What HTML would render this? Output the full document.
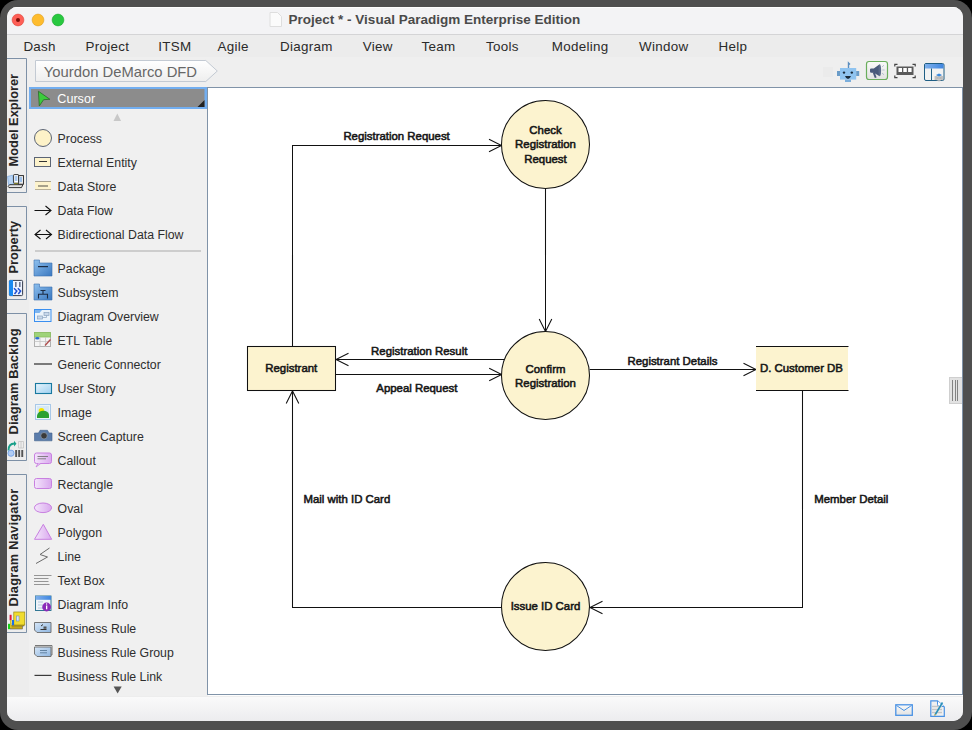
<!DOCTYPE html>
<html><head><meta charset="utf-8">
<style>
*{box-sizing:border-box;margin:0;padding:0}
html,body{width:972px;height:730px;overflow:hidden;background:#000}
body{position:relative;font-family:"Liberation Sans",sans-serif}
svg{position:absolute;left:0;top:0}
svg text{font-family:"Liberation Sans",sans-serif}
</style></head>
<body>
<svg width="972" height="730" viewBox="0 0 972 730">
<defs><clipPath id="wclip"><rect x="7" y="7" width="956" height="714" rx="10"/></clipPath></defs>
<rect x="0" y="0" width="972" height="730" rx="18" fill="#4f4f4f"/>
<g clip-path="url(#wclip)">
<rect x="7" y="7" width="956" height="714" fill="#f0f0f0"/>
<!-- title bar -->
<rect x="7" y="7" width="956" height="27" fill="#f3f3f5"/>
<rect x="7" y="7" width="956" height="1" fill="#fdfdfd"/>
<rect x="7" y="34" width="956" height="1" fill="#d4d4d6"/>
<circle cx="18" cy="20" r="5.9" fill="#fe5f57" stroke="#e0443a" stroke-width="0.6"/>
<circle cx="18" cy="20" r="2" fill="#7e0d07"/>
<circle cx="38" cy="20" r="5.9" fill="#febc2e" stroke="#e0a020" stroke-width="0.6"/>
<circle cx="58" cy="20" r="5.9" fill="#28c840" stroke="#1aa82e" stroke-width="0.6"/>
<path d="M270 12.5 H277.5 L281.5 16.5 V26.5 H270 Z" fill="#fbfbfb" stroke="#dedede" stroke-width="1"/>
<text x="288.6" y="24.3" font-size="13.5" font-weight="bold" fill="#4a4a4a">Project * - Visual Paradigm Enterprise Edition</text>
<!-- menu bar -->
<rect x="7" y="35" width="956" height="22" fill="#ececec"/>
<g font-size="13.4" fill="#2a2a2a" letter-spacing="0.3">
<text x="23.4" y="51">Dash</text>
<text x="85.6" y="51">Project</text>
<text x="158.2" y="51">ITSM</text>
<text x="217.6" y="51">Agile</text>
<text x="280" y="51">Diagram</text>
<text x="362.8" y="51">View</text>
<text x="421.6" y="51">Team</text>
<text x="486" y="51">Tools</text>
<text x="551.8" y="51">Modeling</text>
<text x="639.1" y="51">Window</text>
<text x="718.5" y="51">Help</text>
</g>
<!-- crumb row -->
<rect x="7" y="57" width="956" height="30" fill="#efefef"/>
<path d="M35.5 60.5 H205.8 L217.3 71 L205.8 81.5 H35.5 Z" fill="url(#gcrumb)" stroke="#c3cad3" stroke-width="1"/>
<text x="43.8" y="76.9" font-size="14.8" fill="#676767">Yourdon DeMarco DFD</text>
<!-- toolbar icons -->
<rect x="823" y="67" width="10" height="10" fill="#ebebeb"/>
<g>
<rect x="840" y="68" width="16.2" height="11.6" fill="#90c4f0"/>
<rect x="837" y="71" width="3" height="5" fill="#6a9cc8"/>
<rect x="856.2" y="71" width="3" height="5" fill="#6a9cc8"/>
<rect x="845" y="79.6" width="6" height="2.4" fill="#7aaedc"/>
<path d="M848.5 68 V63 L850 64.5" stroke="#5a8ec0" stroke-width="1.4" fill="none"/>
<circle cx="844" cy="72.6" r="1.2" fill="#1a2a3a"/><circle cx="851.8" cy="72.6" r="1.2" fill="#1a2a3a"/>
<path d="M845 76 H851 Q850 79 848 79 Q846 79 845 76 Z" fill="#1a2a3a"/>
</g>
<rect x="866.5" y="61.5" width="21" height="18" rx="2.5" fill="url(#gbtn)" stroke="#6aae5c" stroke-width="1.2"/>
<path d="M870 69.6 Q870 68.4 871.2 68.4 H873.8 L879.6 64.2 V76.2 L873.8 72.8 H871.2 Q870 72.8 870 71.6 Z" fill="#4a5a7c"/><path d="M872.6 72.3 L874.8 77.9 L876.6 77.5 L874.8 72.6 Z" fill="#4a5a7c"/><ellipse cx="879.8" cy="70.2" rx="1.3" ry="6" fill="#5a6a8a"/>
<path d="M882 67 L884 65.2 M882.3 70 H884.6 M882 73 L884 74.8" stroke="#a8b6c8" stroke-width="0.8"/>
<g>
<path d="M894.8 66.5 V64.3 H897.5 M912.5 64.3 H915.2 V66.5 M894.8 75.5 V77.7 H897.5 M912.5 77.7 H915.2 V75.5" fill="none" stroke="#444" stroke-width="1.2"/>
<rect x="896.5" y="66.5" width="17" height="8.5" fill="#5a5a5a"/>
<rect x="898.5" y="68" width="3.5" height="4" fill="#fff"/><rect x="903.3" y="68" width="3.5" height="4" fill="#fff"/><rect x="908.1" y="68" width="3.5" height="4" fill="#fff"/>
</g>
<g>
<rect x="924.5" y="63.5" width="19.5" height="17" rx="1.5" fill="#f2f2f2" stroke="#1f5e84" stroke-width="1"/>
<rect x="925" y="64" width="18.5" height="4.5" fill="url(#gbar)"/>
<path d="M931.5 68.5 V80.5" stroke="#1f5e84" stroke-width="1"/>
<path d="M934.5 77 L939 75 L943.5 77 L939 79 Z M934.5 79 L939 77 L943.5 79 L939 81 Z" fill="#cfcfcf" stroke="#9a9a9a" stroke-width="0.5"/>
<path d="M936 75 L939 73.5 L942 75 L939 76.5 Z" fill="#3a8ae0"/>
</g>
<!-- tabs column -->
<rect x="7" y="87" width="22" height="610" fill="#ededed"/>

<g fill="#ededed" stroke="#7d90a6" stroke-width="1">
<path d="M7 58.5 H26.5 V192.5 H7"/>
<path d="M7 206.5 H26.5 V299.5 H7"/>
<path d="M7 313.5 H26.5 V460.5 H7"/>
<path d="M7 474.5 H26.5 V632.5 H7"/>
</g>
<g font-size="12.8" font-weight="bold" fill="#262626">
<text transform="translate(17.9 166.4) rotate(-90)">Model Explorer</text>
<text transform="translate(17.9 273.6) rotate(-90)">Property</text>
<text transform="translate(17.9 434.4) rotate(-90)" letter-spacing="0.1">Diagram Backlog</text>
<text transform="translate(17.9 606.5) rotate(-90)" letter-spacing="0.25">Diagram Navigator</text>
</g>
<!-- tab icons -->
<g>
<path d="M7.5 176.5 L12.5 175.2 L13.8 184 L8.6 184.8 Z" fill="#b9d5f5" stroke="#7aa6dc" stroke-width="0.7"/>
<rect x="18.3" y="175.6" width="5.2" height="8.6" fill="#e8e8e8" stroke="#222" stroke-width="0.9"/>
<rect x="19.5" y="177" width="2.5" height="5" fill="#9cc0ea"/>
<rect x="13.6" y="174.6" width="5" height="8.6" rx="0.6" fill="#fff" stroke="#222" stroke-width="0.9"/>
<rect x="14.8" y="176" width="2.6" height="5" fill="#a8c8f0"/>
<rect x="14" y="183.3" width="4" height="1" fill="#8a8a10"/>
<path d="M8.2 186.4 L9.6 184.7 H22.9 L21.5 187.6 H9 Z" fill="#e6e6e6" stroke="#222" stroke-width="0.9"/>
<rect x="9.4" y="280.4" width="13.2" height="15.2" rx="1" fill="#eef4ff" stroke="#343c4c" stroke-width="1"/>
<path d="M13 280 H11 Q9 280 9 282 V294 Q9 296 11 296 H13 Z" fill="#1a8af0"/>
<rect x="15" y="282" width="1.6" height="5" fill="#6a7590"/><rect x="19" y="282" width="1.6" height="5" fill="#6a7590"/>
<path d="M14 288.3 L16.8 291 L14.5 294 M17.8 288.3 L20.6 291 L18.3 294" fill="none" stroke="#1f4fd0" stroke-width="1.5"/>
<path d="M8.5 450.5 Q8.5 443.5 14.5 443.5" fill="none" stroke="#1aa08a" stroke-width="1.9"/>
<path d="M14 440.8 L16.5 443.8 L14 446.6 Z" fill="#1aa08a"/>
<circle cx="11" cy="453.2" r="3.1" fill="#b2cdf4" stroke="#6a9ae4" stroke-width="0.8"/>
<rect x="15.2" y="450" width="1.9" height="7" fill="#555"/><rect x="18.2" y="450" width="1.9" height="7" fill="#555"/><rect x="21.3" y="450" width="1.9" height="7" fill="#555"/>
<path d="M18.5 441.5 H23.5 V448 H18.5 Z M21 441.5 V448" fill="none" stroke="#c4c4c4" stroke-width="0.8"/>
<rect x="10.5" y="625.5" width="12" height="3.5" fill="#c8a818" stroke="#555" stroke-width="0.5"/>
<rect x="12" y="623.5" width="12" height="2.5" fill="#c8a818" stroke="#555" stroke-width="0.5"/>
<rect x="13.8" y="612" width="11" height="13" fill="#f0dc30" stroke="#9a8a10" stroke-width="0.7"/>
<rect x="16.4" y="616" width="2.6" height="5" fill="#dde8f8" stroke="#6a8ad0" stroke-width="0.6"/>
<rect x="9.6" y="614.8" width="2" height="5.5" fill="#e0183a"/>
<rect x="12" y="620" width="2" height="5.2" fill="#1a70e8"/>
<rect x="8" y="623.8" width="2" height="5.4" fill="#18d018"/>
<rect x="10" y="620" width="1.5" height="8" fill="#d8c020"/>
</g>

<!-- palette -->
<rect x="29" y="87" width="178" height="22" fill="#72aef0"/>
<rect x="31" y="89" width="173.5" height="18" fill="#8c8c8c"/>
<path d="M197.5 107 L204.5 100 V107 Z" fill="#222"/>
<path d="M38.4 91.2 L49.9 99.3 L43.6 99.7 L39.3 106 Z" fill="#3ccc3c" stroke="#2a6a2a" stroke-width="0.8" stroke-linejoin="round"/>
<text x="57.3" y="103" font-size="12.6" fill="#ffffff">Cursor</text>
<path d="M113.5 121 L117.3 113.5 L121.1 121 Z" fill="#c8c8c8"/>
<path d="M113.6 686.6 H121.7 L117.65 693.6 Z" fill="#555"/>
<g font-size="12.3" fill="#2e2e2e"><text x="57.6" y="143">Process</text><text x="57.6" y="167">External Entity</text><text x="57.6" y="191">Data Store</text><text x="57.6" y="215">Data Flow</text><text x="57.6" y="239">Bidirectional Data Flow</text><text x="57.6" y="273">Package</text><text x="57.6" y="297">Subsystem</text><text x="57.6" y="321">Diagram Overview</text><text x="57.6" y="345">ETL Table</text><text x="57.6" y="369">Generic Connector</text><text x="57.6" y="393">User Story</text><text x="57.6" y="417">Image</text><text x="57.6" y="441">Screen Capture</text><text x="57.6" y="465">Callout</text><text x="57.6" y="489">Rectangle</text><text x="57.6" y="513">Oval</text><text x="57.6" y="537">Polygon</text><text x="57.6" y="561">Line</text><text x="57.6" y="585">Text Box</text><text x="57.6" y="609">Diagram Info</text><text x="57.6" y="633">Business Rule</text><text x="57.6" y="657">Business Rule Group</text><text x="57.6" y="681">Business Rule Link</text></g>

<!-- Process -->
<circle cx="43" cy="138" r="8.5" fill="#fdf2c8" stroke="#5b6475" stroke-width="1"/>
<!-- External entity -->
<rect x="34.5" y="157.5" width="16" height="9" fill="#fdf3cc" stroke="#5b6475"/>
<line x1="39" y1="161.5" x2="47" y2="161.5" stroke="#333" stroke-width="1"/>
<!-- Data store -->
<rect x="35" y="181" width="16" height="9" fill="#fdf3cc"/>
<line x1="35" y1="181.5" x2="51" y2="181.5" stroke="#a8a290" stroke-width="1"/>
<line x1="35" y1="189.5" x2="51" y2="189.5" stroke="#b8b098" stroke-width="1"/>
<line x1="38" y1="186" x2="48" y2="186" stroke="#8a8674" stroke-width="1.6"/>
<!-- Data flow -->
<path d="M34.5 210.5 H51 M45.5 206 L51 210.5 L45.5 215" fill="none" stroke="#111" stroke-width="1.1"/>
<!-- Bidirectional -->
<path d="M35 234.5 H51.5 M40.5 230 L35 234.5 L40.5 239 M46 230 L51.5 234.5 L46 239" fill="none" stroke="#111" stroke-width="1.1"/>
<!-- separator -->
<rect x="35" y="250" width="166" height="2" fill="#cdcdcd"/>
<!-- Package -->
<defs>
<linearGradient id="gblue" x1="0" y1="0" x2="1" y2="1"><stop offset="0" stop-color="#8ec0ee"/><stop offset="1" stop-color="#3a78c0"/></linearGradient>
<linearGradient id="gpurp" x1="0" y1="0" x2="1" y2="0"><stop offset="0" stop-color="#f4e6fb"/><stop offset="1" stop-color="#d9a8ee"/></linearGradient>
<linearGradient id="gsky" x1="0" y1="0" x2="1" y2="1"><stop offset="0" stop-color="#e8f5fd"/><stop offset="1" stop-color="#9ed0f0"/></linearGradient>
<linearGradient id="gbtn" x1="0" y1="0" x2="0" y2="1"><stop offset="0" stop-color="#fafafa"/><stop offset="1" stop-color="#e2e2e2"/></linearGradient>
<linearGradient id="gcrumb" x1="0" y1="0" x2="0" y2="1"><stop offset="0" stop-color="#ffffff"/><stop offset="1" stop-color="#eeeeee"/></linearGradient>
<linearGradient id="gbar" x1="0" y1="0" x2="1" y2="0"><stop offset="0" stop-color="#7fb0ec"/><stop offset="1" stop-color="#3f86e0"/></linearGradient>
<linearGradient id="gcard" x1="0" y1="0" x2="1" y2="1"><stop offset="0" stop-color="#d6e6f7"/><stop offset="1" stop-color="#8fb6e0"/></linearGradient>
</defs>
<path d="M34 260 H39.5 V263 H52 V276 H34 Z" fill="url(#gblue)" stroke="#3a6fb0" stroke-width="0.6"/>
<rect x="38" y="266" width="10" height="1.2" fill="#1c2c44"/>
<!-- Subsystem -->
<path d="M34 284 H39.5 V287 H52 V300 H34 Z" fill="url(#gblue)" stroke="#3a6fb0" stroke-width="0.6"/>
<path d="M40.5 290.5 H45.5 M43 290.5 V294 M38.5 298.5 V294.2 H47.5 V298.5" fill="none" stroke="#1c2c44" stroke-width="1.1"/>
<!-- Diagram Overview -->
<rect x="34.5" y="309.5" width="16.5" height="12" fill="#eaf3fb" stroke="#3a8ff0" stroke-width="1"/>
<path d="M35 310 H42 L39.5 313 H35 Z" fill="#7db4ee"/>
<rect x="37.5" y="316" width="5" height="3" fill="#c8d8ea" stroke="#8aa4c0" stroke-width="0.7"/>
<rect x="44" y="312.5" width="5" height="3" fill="#c8d8ea" stroke="#8aa4c0" stroke-width="0.7"/>
<path d="M42.5 317.5 H46.5 V315.5" fill="none" stroke="#8aa4c0" stroke-width="0.7"/>
<!-- ETL Table -->
<rect x="34.5" y="332.5" width="16" height="14" fill="#f4f4f4" stroke="#b0b0b0"/>
<rect x="34.5" y="332.5" width="16" height="4.5" fill="#9fd37a" stroke="#8cc060" stroke-width="0.8"/>
<path d="M34.5 341.5 H50.5 M40 337 V346.5 M45.5 337 V346.5" stroke="#c4c4c4" stroke-width="0.8" fill="none"/>
<ellipse cx="37.3" cy="338.3" rx="2.2" ry="1.2" fill="#2e6fd0"/>
<path d="M45 345.5 L50.5 339.5" stroke="#b05050" stroke-width="1.4"/>
<!-- Generic connector -->
<rect x="34" y="363" width="18" height="2" fill="#7a7a7a"/>
<!-- User story -->
<rect x="35.5" y="383.5" width="16" height="10" fill="url(#gsky)" stroke="#1879a0" stroke-width="1.1"/>
<!-- Image -->
<rect x="35.5" y="404.5" width="15" height="15" fill="#eaf4fb" stroke="#a8c8e8" stroke-width="1"/>
<rect x="37" y="406" width="12" height="12" fill="#d6e8f6"/>
<circle cx="41.5" cy="410.8" r="2.8" fill="#f4e400"/>
<path d="M37 418 V415.5 Q38 411.5 42.5 410.8 Q48 410.5 49 414.5 V418 Z" fill="#2aa030"/>
<!-- Screen capture -->
<path d="M34.5 433 H38.5 L40 430.3 H47.5 L49 433 H52 V440.8 H34.5 Z" fill="#5a7cab" stroke="#3f5f8a" stroke-width="0.6"/>
<circle cx="44" cy="435.8" r="3.3" fill="#3a3a3a" stroke="#8a9ab0" stroke-width="0.8"/>
<!-- Callout -->
<rect x="34.5" y="453" width="17" height="10.5" rx="2" fill="url(#gpurp)" stroke="#c880e0" stroke-width="1"/>
<path d="M38 463.3 L36 467 L41 463.3" fill="#e6c6f4" stroke="#c880e0" stroke-width="0.8"/>
<path d="M37.5 456.5 H48 M37.5 458.8 H46" stroke="#777" stroke-width="0.9"/>
<!-- Rectangle -->
<rect x="34.5" y="478.5" width="17" height="10" rx="2" fill="url(#gpurp)" stroke="#c880e0" stroke-width="1"/>
<!-- Oval -->
<ellipse cx="43" cy="507.8" rx="8.6" ry="4.8" fill="url(#gpurp)" stroke="#c880e0" stroke-width="1"/>
<!-- Polygon -->
<path d="M43.3 524.3 L51.7 539.3 H34.5 Z" fill="url(#gpurp)" stroke="#c880e0" stroke-width="1" stroke-linejoin="round"/>
<!-- Line -->
<path d="M49.5 548 L40 554.5 L47.5 557 L36 563.5" fill="none" stroke="#6a6a6a" stroke-width="1"/>
<!-- Text box -->
<path d="M34 575.5 H51.5 M34 578.5 H48.5 M34 581.5 H48.5 M34 584.5 H49.5" stroke="#8a8a8a" stroke-width="0.9"/>
<!-- Diagram info -->
<rect x="35.5" y="596" width="15.5" height="14.5" fill="#eef3f8" stroke="#1e6a8a" stroke-width="0.9"/>
<rect x="35.5" y="596" width="15.5" height="3.8" fill="url(#gbar)"/>
<path d="M38 602 H43 M38 605 H43 M38 608 H43" stroke="#c8d8e8" stroke-width="1.5"/>
<circle cx="46.6" cy="607" r="4.4" fill="#8a2ab8"/>
<rect x="46" y="605.5" width="1.3" height="3.8" fill="#fff"/><circle cx="46.6" cy="604" r="0.7" fill="#fff"/>
<!-- Business rule -->
<path d="M34.5 622.5 H51 V632.5 H37 L34.5 630 Z" fill="url(#gcard)" stroke="#6a6a6a" stroke-width="0.9"/>
<path d="M41 626 L43 624.5 M40.5 629.5 H46.5" stroke="#333" stroke-width="1"/><rect x="43.5" y="626.5" width="3" height="2.3" fill="#555"/>
<!-- Business rule group -->
<path d="M35 645.5 H52 V655 H51" fill="none" stroke="#6a6a6a" stroke-width="0.9"/>
<path d="M34.5 647 H51 V656.5 H37 L34.5 654 Z" fill="url(#gcard)" stroke="#6a6a6a" stroke-width="0.9"/>
<path d="M40 650.5 H47 M40 652.8 H47" stroke="#5a7a9a" stroke-width="0.9"/>
<!-- Business rule link -->
<rect x="34.5" y="674.8" width="17" height="1.2" fill="#3a3a3a"/>

<!-- canvas -->
<rect x="207.5" y="87.5" width="760" height="607" fill="#ffffff" stroke="#8093a8" stroke-width="1"/>

<g fill="none" stroke="#111" stroke-width="1.05">
<path d="M292.5 346.5 V145.5 H501.5"/>
<path d="M489.00 151.80 L501.50 145.50 L489.00 139.20"/>
<path d="M545.5 188.5 V331.5"/>
<path d="M539.20 319.00 L545.50 331.50 L551.80 319.00"/>
<path d="M504 359.5 H336"/>
<path d="M348.50 353.20 L336.00 359.50 L348.50 365.80"/>
<path d="M336 374.5 H501.7"/>
<path d="M489.20 380.80 L501.70 374.50 L489.20 368.20"/>
<path d="M589.7 369.5 H756"/>
<path d="M743.50 375.80 L756.00 369.50 L743.50 363.20"/>
<path d="M802.5 390.5 V607.5 H590"/>
<path d="M602.50 601.20 L590.00 607.50 L602.50 613.80"/>
<path d="M501.5 607.5 H292.5 V391"/>
<path d="M298.80 403.50 L292.50 391.00 L286.20 403.50"/>
</g>
<g fill="#fcf3cf" stroke="#111" stroke-width="1.05">
<circle cx="545.5" cy="144.5" r="44"/>
<circle cx="545.5" cy="375.5" r="44"/>
<circle cx="545.5" cy="606.5" r="44"/>
<rect x="247.5" y="346.5" width="88" height="44"/>
</g>
<rect x="756" y="346.5" width="92" height="44" fill="#fcf3cf"/>
<path d="M756 346.5 H848.5 M756 390.5 H848.5" stroke="#111" stroke-width="1.05"/>
<g font-size="11.4" fill="#161616" stroke="#161616" stroke-width="0.55">
<text x="343.4" y="140.1">Registration Request</text>
<text x="371.1" y="354.8">Registration Result</text>
<text x="376.3" y="391.5">Appeal Request</text>
<text x="627.5" y="365.4" >Registrant Details</text>
<text x="303.5" y="502.8">Mail with ID Card</text>
<text x="814.3" y="502.6" >Member Detail</text>
<text x="265.3" y="371.6" >Registrant</text>
<text x="760" y="371.8">D. Customer DB</text>
</g>
<g font-size="11.4" fill="#161616" stroke="#161616" stroke-width="0.55" text-anchor="middle">
<text x="545.5" y="133.7">Check</text>
<text x="545.5" y="148">Registration</text>
<text x="545.5" y="162.5">Request</text>
<text x="545.5" y="372.7">Confirm</text>
<text x="545.5" y="386.9">Registration</text>
<text x="545.5" y="610">Issue ID Card</text>
</g>

<!-- scroll handle -->
<rect x="949.5" y="377.5" width="13" height="26" fill="#e2e2e2" stroke="#cfcfcf" stroke-width="1"/>
<path d="M952.5 380 V401 M955.5 380 V401 M957.5 380 V401" stroke="#777" stroke-width="0.9"/>
<rect x="962" y="87" width="1" height="608" fill="#8093a8"/>
<!-- status bar -->
<defs><linearGradient id="gstat" x1="0" y1="0" x2="0" y2="1"><stop offset="0" stop-color="#fafafa"/><stop offset="1" stop-color="#ececee"/></linearGradient></defs>
<rect x="7" y="697" width="956" height="24" fill="url(#gstat)"/>
<rect x="208" y="695" width="755" height="1" fill="#fdfdfd"/>
<rect x="7" y="696" width="956" height="1" fill="#ededed"/>
<rect x="895.8" y="704.8" width="16.5" height="10.5" fill="url(#gbtn)" stroke="#4a92e4" stroke-width="1.3"/>
<path d="M896.5 705.5 L904 710.5 L911.5 705.5" fill="none" stroke="#4a92e4" stroke-width="1"/>
<path d="M930.8 700.8 H937.5 L944.3 707 V716.3 H930.8 Z" fill="#f0f0f0" stroke="#4a92e4" stroke-width="1.2"/><path d="M937.5 701 V704.5 Q937.5 706.5 939.5 706.5 H944" fill="#fff" stroke="#4a92e4" stroke-width="1"/>
<path d="M932 706.5 H942 M932 709.5 H942 M932 712.5 H942" stroke="#c6c6c6" stroke-width="1.3"/>
<path d="M935 715 L942.5 702.5" stroke="#2a90b8" stroke-width="1.6"/>
<path d="M934.5 715.8 L935.5 714" stroke="#d8b040" stroke-width="1"/>
</g>
</svg>
</body></html>
